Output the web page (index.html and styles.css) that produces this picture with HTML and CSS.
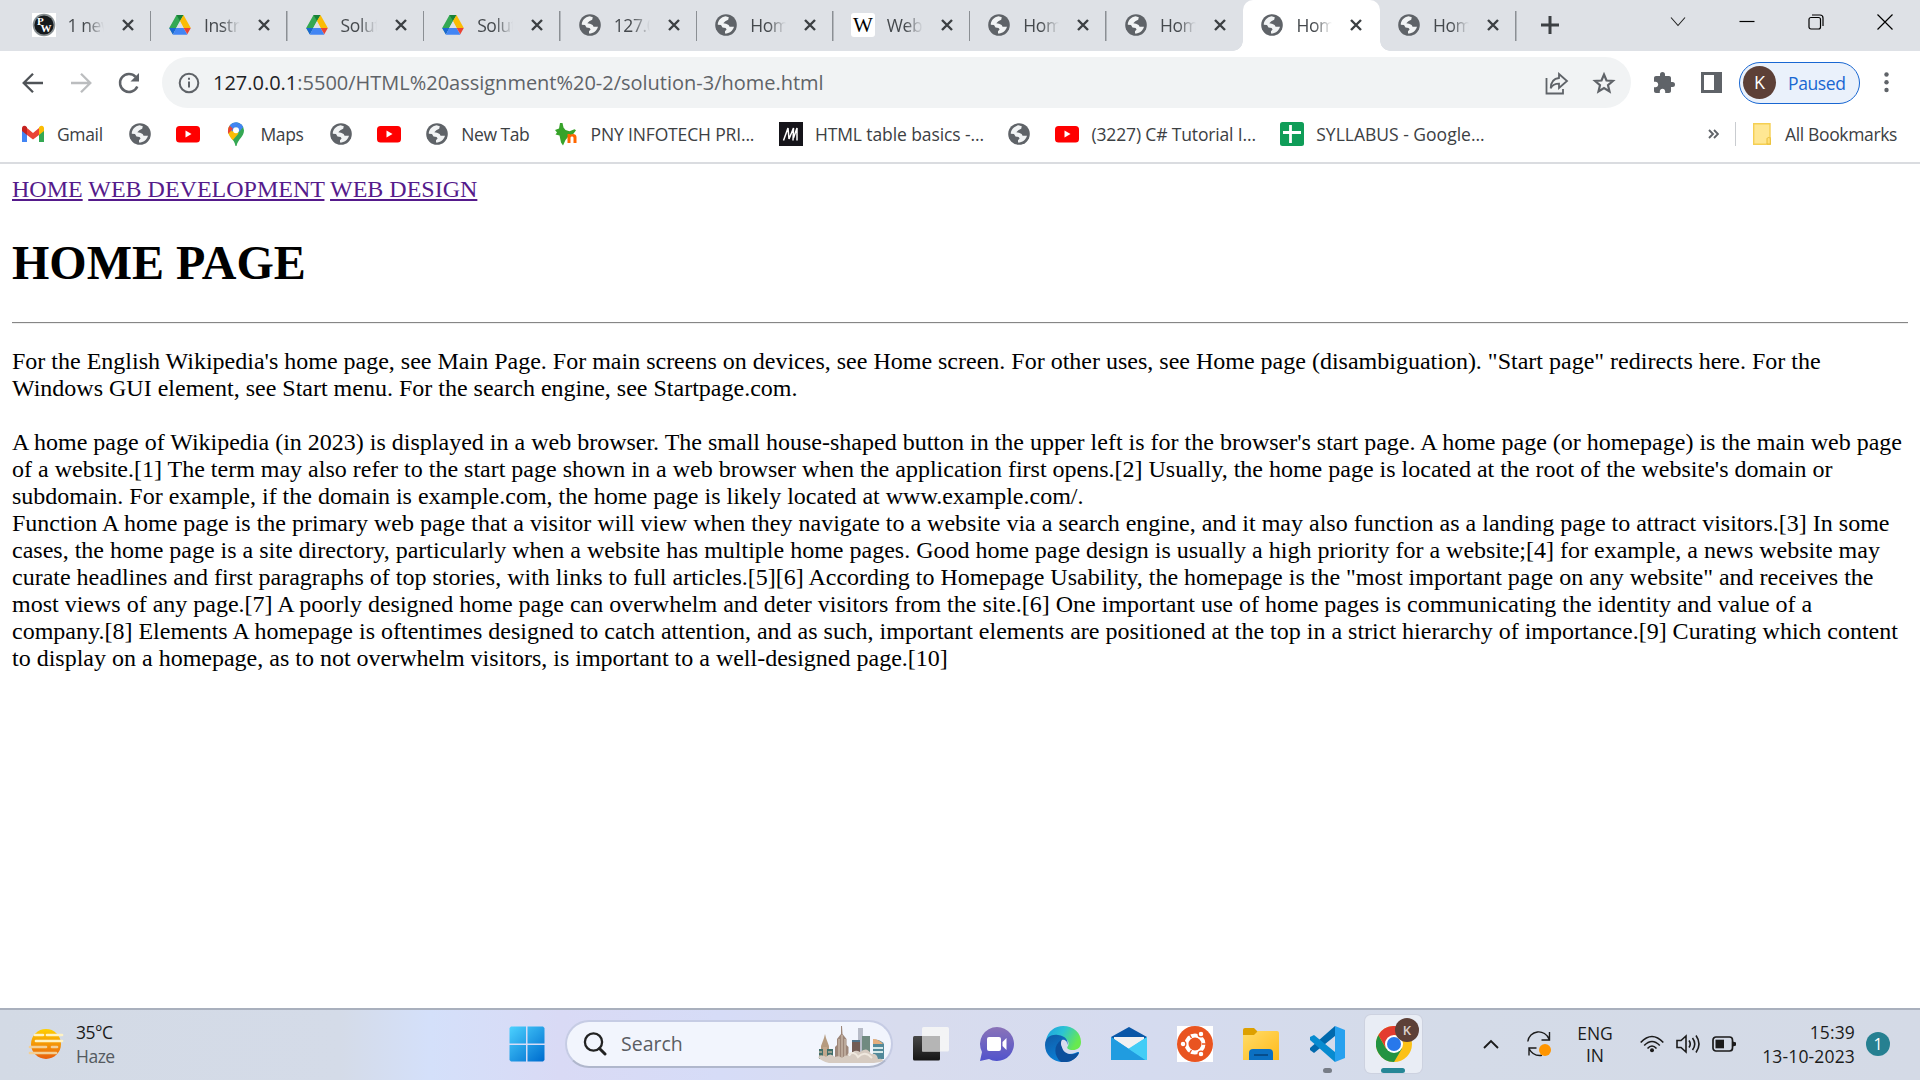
FILE: index.html
```html
<!DOCTYPE html>
<html lang="en">
<head>
<meta charset="utf-8">
<title>Home</title>
<link rel="stylesheet" href="styles.css">
</head>
<body>
<svg class="sprite" aria-hidden="true">
  <defs>
    <symbol id="globe" viewBox="0 0 24 24"><circle cx="12" cy="12" r="10.800" fill="#5f6368"/><path d="M3.800 11.800C3.600 8 7 4 11.500 3.300L14.800 4.200 14.200 6.800 11.300 8.200 9.300 10.300 12 10.800 14.600 12 15.600 13.800 20 13.800C18.800 18 15.500 20.600 11 20.600L11 18.200 12.600 16.600 11.600 15 8.500 14.400 7 12Z" fill="#f1f3f4"/></symbol>
    <symbol id="drive" viewBox="0 0 24 24"><path d="M8.500 2h7L12 8 4.800 21 1.200 15z" fill="#34a853"/><path d="M8.500 2h7L12 8z" fill="#188038"/><path d="M15.500 2l7.300 13h-7.200L12 8z" fill="#fbbc04"/><path d="M8.300 15h7.300l3.800 6.700H4.800z" fill="#4285f4"/><path d="M15.600 15h7.200l-3.500 6.300z" fill="#ea4335"/><path d="M8.300 15H1.200l3.600 6.400z" fill="#1967d2"/><path d="M12 8.600L15.600 15H8.400z" fill="#dee1e6"/></symbol>
    <symbol id="close" viewBox="0 0 14 14"><path d="M2 2l10 10M12 2L2 12" stroke="#3c4043" stroke-width="2.400" fill="none"/></symbol>
    <symbol id="youtube" viewBox="0 0 24 24"><rect y="4" width="24" height="16.500" rx="3.500" fill="#f00"/><path d="M9.500 8.500v7l6-3.500z" fill="#fff"/></symbol>
  </defs>
</svg>

<header class="browser">
  <div class="tabs">
    <div class="tab"><svg class="fav" viewBox="0 0 24 24"><path d="M0 0h24v24H0z" fill="#fff"/><circle cx="12" cy="12" r="11.300" fill="#878e91"/><circle cx="12" cy="12" r="9.600" fill="#15191c"/><text class="pw" x="5" y="12">P</text><text class="pw" x="8.500" y="19">W</text></svg><span class="tab-title">1 new</span><svg class="close"><use href="#close"/></svg></div>
    <div class="tab"><svg class="fav"><use href="#drive"/></svg><span class="tab-title">Instru</span><svg class="close"><use href="#close"/></svg></div>
    <div class="tab"><svg class="fav"><use href="#drive"/></svg><span class="tab-title">Soluti</span><svg class="close"><use href="#close"/></svg></div>
    <div class="tab"><svg class="fav"><use href="#drive"/></svg><span class="tab-title">Soluti</span><svg class="close"><use href="#close"/></svg></div>
    <div class="tab"><svg class="fav"><use href="#globe"/></svg><span class="tab-title">127.0</span><svg class="close"><use href="#close"/></svg></div>
    <div class="tab"><svg class="fav"><use href="#globe"/></svg><span class="tab-title">Home</span><svg class="close"><use href="#close"/></svg></div>
    <div class="tab"><svg class="fav" viewBox="0 0 24 24"><rect width="24" height="24" rx="3" fill="#fff"/><text class="wiki" x="12" y="19">W</text></svg><span class="tab-title">Web</span><svg class="close"><use href="#close"/></svg></div>
    <div class="tab"><svg class="fav"><use href="#globe"/></svg><span class="tab-title">Home</span><svg class="close"><use href="#close"/></svg></div>
    <div class="tab before-active"><svg class="fav"><use href="#globe"/></svg><span class="tab-title">Home</span><svg class="close"><use href="#close"/></svg></div>
    <div class="tab active"><svg class="fav"><use href="#globe"/></svg><span class="tab-title">Home</span><svg class="close"><use href="#close"/></svg></div>
    <div class="tab"><svg class="fav"><use href="#globe"/></svg><span class="tab-title">Home</span><svg class="close"><use href="#close"/></svg></div>
    <svg class="new-tab" viewBox="0 0 18 18"><path d="M9 0v18M0 9h18" stroke="#3c4043" stroke-width="3"/></svg>
    <div class="window-buttons">
      <svg viewBox="0 0 16 16"><path d="M1 3.500l7 8 7-8" fill="none" stroke="#222" stroke-width="1.100"/></svg>
      <svg viewBox="0 0 16 16"><path d="M.5 7.500h15" stroke="#000" stroke-width="1.200"/></svg>
      <svg viewBox="0 0 16 16"><rect x="1" y="3.500" width="11.500" height="11.500" rx="2" fill="none" stroke="#000" stroke-width="1.200"/><path d="M4 1h8a3 3 0 0 1 3 3v8" fill="none" stroke="#000" stroke-width="1.200"/></svg>
      <svg viewBox="0 0 16 16"><path d="M.5.500l15 15M15.500.500l-15 15" stroke="#000" stroke-width="1.200"/></svg>
    </div>
  </div>

  <div class="toolbar">
    <nav class="nav-buttons">
      <svg viewBox="0 0 24 24"><path d="M22 12H3M12 2.700L2.700 12l9.300 9.300" fill="none" stroke="#4f5357" stroke-width="2.300"/></svg>
      <svg viewBox="0 0 24 24"><path d="M2 12h19M12 2.700l9.300 9.300-9.300 9.300" fill="none" stroke="#bbbdbf" stroke-width="2.300"/></svg>
      <svg viewBox="0 0 24 24"><path d="M20.300 15.500A9 9 0 1 1 18.600 5.800" fill="none" stroke="#5f6368" stroke-width="2.500"/><path d="M22 2v8.500h-8.500z" fill="#5f6368"/></svg>
    </nav>
    <div class="omnibox">
      <svg class="info" viewBox="0 0 22 22"><circle cx="11" cy="11" r="9.300" fill="none" stroke="#5f6368" stroke-width="2"/><path d="M11 9.500v6M11 5.800v2" stroke="#5f6368" stroke-width="2"/></svg>
      <span class="url"><b>127.0.0.1</b>:5500/HTML%20assignment%20-2/solution-3/home.html</span>
      <svg class="share" viewBox="0 0 24 24"><path d="M1.500 7v15.500H18V18" fill="none" stroke="#5f6368" stroke-width="1.800"/><path d="M14 3l8 7-8 7v-4.300c-4 0-6.500 1.200-8.300 4.600C5.900 11 8.500 7.500 14 7z" fill="none" stroke="#5f6368" stroke-width="1.800"/></svg>
      <svg class="star" viewBox="0 0 24 24"><path d="M12 3.500l2.500 6 6.400.5-4.900 4.200 1.500 6.300L12 17.100l-5.500 3.400L8 14.200 3.100 10l6.400-.5z" fill="none" stroke="#5f6368" stroke-width="2.200"/></svg>
    </div>
    <svg class="puzzle" viewBox="0 0 24 24"><path d="M20.500 11H19V7c0-1.100-.9-2-2-2h-4V3.500a2.500 2.500 0 0 0-5 0V5H4c-1.100 0-1.990.9-1.990 2v3.800H3.500c1.490 0 2.700 1.210 2.700 2.700s-1.210 2.700-2.700 2.700H2V20c0 1.100.9 2 2 2h3.800v-1.500c0-1.490 1.210-2.700 2.700-2.700s2.700 1.210 2.700 2.700V22H17c1.100 0 2-.9 2-2v-4h1.500a2.500 2.500 0 0 0 0-5z" fill="#5f6368"/></svg>
    <svg class="panel" viewBox="0 0 21 21"><path d="M0 0h21v21H0z" fill="#5f6368"/><path d="M3 3h10v15H3z" fill="#fff"/></svg>
    <div class="profile"><span class="avatar">K</span><span class="paused">Paused</span></div>
    <svg class="menu" viewBox="0 0 5 21"><circle cx="2.500" cy="2.500" r="2.200"/><circle cx="2.500" cy="10.200" r="2.200"/><circle cx="2.500" cy="18" r="2.200"/></svg>
  </div>

  <div class="bookmarks">
    <div class="bm"><svg viewBox="0 0 24 24"><path d="M1 6v14h5V10z" fill="#4285f4"/><path d="M23 6v14h-5V10z" fill="#34a853"/><path d="M6 6l6 5 6-5v7l-6 4.500L6 13z" fill="#ea4335"/><path d="M1 6.500c0-3 3-3.500 5-1.200V13l-5-4z" fill="#c5221f"/><path d="M23 6.500c0-3-3-3.500-5-1.200V13l5-4z" fill="#fbbc04"/></svg><span class="w-gmail">Gmail</span></div>
    <div class="bm"><svg><use href="#globe"/></svg></div>
    <div class="bm"><svg><use href="#youtube"/></svg></div>
    <div class="bm"><svg viewBox="0 0 24 24"><path d="M4 8.500a8 8 0 0 1 16 0c0 6-6 8.500-7.500 15.500h-1C10.500 17.500 4 14 4 8.500z" fill="#34a853"/><path d="M4.200 10A8 8 0 0 1 6 3.500l8.500 8-5.800 6.800C6.500 15.500 4.500 13 4.200 10z" fill="#fbbc04"/><path d="M5.700 3.700C8 .5 12.500-.3 15 .9l-7 8.800z" fill="#4285f4"/><path d="M5.700 3.700L9 6.800l-4.800 5C3.600 8.500 4 6 5.700 3.700z" fill="#ea4335"/><path d="M15 .9a8 8 0 0 1 4.200 4L15 10l-3-5.500z" fill="#4285f4"/><circle cx="12" cy="8.300" r="3" fill="#fff"/></svg><span class="w-maps">Maps</span></div>
    <div class="bm"><svg><use href="#globe"/></svg></div>
    <div class="bm"><svg><use href="#youtube"/></svg></div>
    <div class="bm"><svg><use href="#globe"/></svg><span class="w-newtab">New Tab</span></div>
    <div class="bm"><svg viewBox="0 0 24 24"><path d="M5 1h2.500l1 4.500 2 2.500 4 1.200 5-2 1.500 1-3 4-4 1.500-3.500 4.300-2.500 5.500-2-3-1.500-7-4-1 1.500-2-2-2.500 4-1.500z" fill="#37a32a"/><path d="M12.500 21v-9h3v1c2-2 6-1 6 2v6h-3v-5c0-2-3-2-3 0v5z" fill="#f60"/></svg><span class="w-pny">PNY INFOTECH PRI...</span></div>
    <div class="bm"><svg viewBox="0 0 24 24"><path d="M0 0h24v24H0z" fill="#15141a"/><path d="M4.500 18.500L9 6l1 11L14.500 6l-.5 12.500M14.500 16L18 6v12.500" fill="none" stroke="#fff" stroke-width="1.500"/></svg><span class="w-html">HTML table basics -...</span></div>
    <div class="bm"><svg><use href="#globe"/></svg></div>
    <div class="bm"><svg><use href="#youtube"/></svg><span class="w-cs">(3227) C# Tutorial I...</span></div>
    <div class="bm"><svg viewBox="0 0 24 24"><rect width="24" height="24" rx="2.500" fill="#0f9d58"/><path d="M10.500 3v18M3 10.500h18" stroke="#fff" stroke-width="2.800"/></svg><span class="w-syl">SYLLABUS - Google...</span></div>
    <svg class="more" viewBox="0 0 11 10"><path d="M1 1l4 4-4 4M6 1l4 4-4 4" fill="none" stroke="#5f6368" stroke-width="1.900"/></svg>
    <i class="divider"></i>
    <div class="bm all"><svg viewBox="0 0 18 22"><path d="M.7.700h16.300v14h1v6.500H.700z" fill="#ffe793" stroke="#f5cf53" stroke-width="1.400"/><path d="M14 21v-5c0-2 3.300-2 3.300 0v5z" fill="#ffe07a" stroke="#e8bd38"/></svg><span class="w-all">All Bookmarks</span></div>
  </div>
</header>

<main class="page">
  <nav><a href="#">HOME</a> <a href="#">WEB DEVELOPMENT</a> <a href="#">WEB DESIGN</a></nav>
  <h1>HOME PAGE</h1>
  <hr>
  <p>For the English Wikipedia's home page, see Main Page. For main screens on devices, see Home screen. For other uses, see Home page (disambiguation). "Start page" redirects here. For the Windows GUI element, see Start menu. For the search engine, see Startpage.com.<br><br>
  A home page of Wikipedia (in 2023) is displayed in a web browser. The small house-shaped button in the upper left is for the browser's start page. A home page (or homepage) is the main web page of a website.[1] The term may also refer to the start page shown in a web browser when the application first opens.[2] Usually, the home page is located at the root of the website's domain or subdomain. For example, if the domain is example.com, the home page is likely located at www.example.com/.<br>
  Function A home page is the primary web page that a visitor will view when they navigate to a website via a search engine, and it may also function as a landing page to attract visitors.[3] In some cases, the home page is a site directory, particularly when a website has multiple home pages. Good home page design is usually a high priority for a website;[4] for example, a news website may curate headlines and first paragraphs of top stories, with links to full articles.[5][6] According to Homepage Usability, the homepage is the "most important page on any website" and receives the most views of any page.[7] A poorly designed home page can overwhelm and deter visitors from the site.[6] One important use of home pages is communicating the identity and value of a company.[8] Elements A homepage is oftentimes designed to catch attention, and as such, important elements are positioned at the top in a strict hierarchy of importance.[9] Curating which content to display on a homepage, as to not overwhelm visitors, is important to a well-designed page.[10]</p>
</main>

<footer class="taskbar">
  <div class="weather">
    <svg viewBox="0 0 36 32"><defs><linearGradient id="sun" x2="0" y2="1"><stop stop-color="#ffd000"/><stop offset="1" stop-color="#e85d0c"/></linearGradient></defs><circle cx="18" cy="16" r="15" fill="url(#sun)"/><g stroke-width="2.700" stroke-linecap="round"><path d="M7 7h8M19 7h15M8 13h26" stroke="#fff3c4"/><path d="M2 19h16M24 19h5M2 25h26" stroke="#f3cf95"/></g></svg>
    <div><div class="temp">35°C</div><div class="haze">Haze</div></div>
  </div>
  <div class="apps">
    <svg class="app" viewBox="0 0 36 36"><defs><linearGradient id="win" gradientUnits="userSpaceOnUse" x1="0" y1="0" x2="32" y2="36"><stop stop-color="#4dd3ff"/><stop offset="1" stop-color="#006fd0"/></linearGradient></defs><path d="M2 .5h15v17H.5V2zM18.500.500H34l1.500 1.500v15.500h-17zM.5 19H17v16.500H2L.5 34zM18.500 19h17v15L34 35.500H18.500z" fill="url(#win)"/></svg>
    <div class="search">
      <svg class="mag" viewBox="0 0 24 24"><circle cx="10.500" cy="10" r="8.600" fill="none" stroke="#222" stroke-width="2.300"/><path d="M16.500 16.500L22 22" stroke="#222" stroke-width="3" stroke-linecap="round"/></svg>
      <span>Search</span>
      <svg class="city" viewBox="0 0 70 38"><path d="M7 13l1-4 1 4 3 8v13H4V21z" fill="#b69b80"/><path d="M2 24h14v10H2z" fill="#426f6b"/><path d="M6 22h4v12H6z" fill="#c3a88d"/><path d="M2 27h3M11 27h4M2 31h3M11 31h4" stroke="#b9b19b" stroke-width="1.500"/><path d="M24 1l1 0 .5 8 4 5v6l2 2v14H18V22l2-2v-6l4-5z" fill="#9d8679"/><path d="M22 14v22M25 10v26M28 14v22" stroke="#d9cabb"/><path d="M41 3h5v25h-5z" fill="#b8bcc8"/><path d="M45 11h8v18h-8z" fill="#708a80"/><path d="M35 16h8v13h-8z" fill="#725c55"/><path d="M35 16h8" stroke="#517288" stroke-width="2"/><path d="M56 15c5-1 9 1 11 4v15H56z" fill="#52899a"/><path d="M56 14c4 0 8 2 10 5H56z" fill="#e3ad7c"/><path d="M56 23h10M56 27h10" stroke="#d7e9e9" stroke-width="2"/><path d="M1 32q5-3 8 0q4-5 9 0q4-2 7 1q4-4 8-2q4-8 10-4q7-6 11 2q6-1 7 5q5-1 5 2-5 2-13 2H12Q4 36 1 32z" fill="#d6cbc1"/><path d="M31 30q6-5 10 2q7-7 14 1" fill="none" stroke="#efe8de" stroke-width="2"/></svg>
    </div>
    <svg class="app" viewBox="0 0 36 36"><defs><linearGradient id="dk" x2="0" y2="1"><stop stop-color="#484848"/><stop offset="1" stop-color="#151515"/></linearGradient></defs><rect y="10" width="27" height="24.500" rx="1.500" fill="url(#dk)"/><rect x="9" y="1" width="27" height="24.500" rx="1.500" fill="#f5f5f5" opacity=".92"/><path d="M9 10h18v15.500H9z" fill="#b5b5b5"/></svg>
    <svg class="app" viewBox="0 0 36 36"><defs><linearGradient id="chat" x2="0" y2="1"><stop stop-color="#8a73b8"/><stop offset="1" stop-color="#5153cc"/></linearGradient></defs><path d="M18 1a17 17 0 1 1-8 32L1 35l2-9A17 17 0 0 1 18 1z" fill="url(#chat)"/><rect x="8" y="11" width="14" height="14" rx="2" fill="#fff"/><path d="M23.500 16l4-4v12l-4-4z" fill="#fff"/></svg>
    <svg class="app" viewBox="0 0 36 36"><defs><linearGradient id="e1" x2="1" y2=".4"><stop stop-color="#1b9de2"/><stop offset=".5" stop-color="#2cc3d4"/><stop offset="1" stop-color="#68e94f"/></linearGradient><linearGradient id="e2" x2=".6" y2="1"><stop stop-color="#105aa5"/><stop offset="1" stop-color="#0a85dc"/></linearGradient></defs><path d="M1 14C3 5 10 0 18 0c11 0 18 7 18 16 0 6-4 8-8 8-5 0-7-2-5-4 2-4-1-8-7-8z" fill="url(#e1)"/><path d="M0 19C0 10 8 8 13 9c8 1 11 6 9 10l-3-2c-4 2-4 11 5 11 5 0 8-2 9-2 2 0 1 2-1 4-4 5-9 6-14 6C8 36 0 29 0 19z" fill="url(#e2)"/><path d="M16 14c-7 5-8 15 0 22 8 1 14-2 17-7 1-2 1-3-1-2-7 3-14 0-15-6-.5-3 1-5 3-6z" fill="#0c4f9c"/><path d="M17 14c3-1 6 2 5 5-2 2-1 4 1 5-4 0-7-3-7-6 0-2 0-3 1-4z" fill="#d8dcee"/></svg>
    <svg class="app" viewBox="0 0 36 36"><path d="M0 11L18 1l18 10v7H0z" fill="#0a57a7"/><path d="M3 11h30v12H3z" fill="#f1f1f2"/><path d="M0 11l18 12L36 11v23H0z" fill="#2aabe8"/><path d="M36 11L17 23l17 11h2z" fill="#42cdf6"/><path d="M0 11v23h34z" fill="#209ce0"/></svg>
    <svg class="app" viewBox="0 0 36 36"><path d="M0 0h36v36H0z" fill="#fff"/><circle cx="18" cy="18" r="18" fill="#e95420"/><circle cx="18" cy="18" r="8.500" fill="none" stroke="#fff" stroke-width="4"/><g fill="#fff" stroke="#e95420" stroke-width="1.300"><circle cx="6" cy="18" r="2.900"/><circle cx="24" cy="8" r="2.900"/><circle cx="24" cy="28" r="2.900"/></g><path d="M25 18h5M14.500 12l-3-5M14.500 24l-3 5" stroke="#e95420" stroke-width="1.400"/></svg>
    <svg class="app" viewBox="0 0 36 36"><defs><linearGradient id="fold" x2="1" y2="1"><stop stop-color="#ffdc69"/><stop offset="1" stop-color="#ffba1a"/></linearGradient></defs><path d="M0 4q0-2 2-2h9l4 4v4H0z" fill="#dda000"/><path d="M0 9h11l4-4h19q2 0 2 2v27H0z" fill="url(#fold)"/><path d="M6 34v-7q0-4 4-4h16q4 0 4 4v7z" fill="#0b70c2"/><path d="M11 29h14" stroke="#064a86" stroke-width="1.800"/></svg>
    <div class="app-slot vs"><svg class="app" viewBox="0 0 36 36"><path d="M26 0v10L5 27l-4-3v-2z" fill="#0069ad"/><path d="M26 36V26L5 9l-4 2v3z" fill="#078bd0"/><path d="M26 0l10 4v28l-10 4z" fill="#27a1ef"/></svg></div>
    <div class="app-slot chrome"><svg class="app" viewBox="0 0 36 36"><circle cx="18" cy="18" r="18" fill="#fbc116"/><path d="M2.400 9A18 18 0 0 0 18 36l8-13.500-16 0z" fill="#229342"/><path d="M2.400 9A18 18 0 0 1 33.600 9H18L10.200 22.500z" fill="#e33b2e"/><circle cx="18" cy="18" r="9" fill="#fff"/><circle cx="18" cy="18" r="7" fill="#2878eb"/></svg><span class="mini">K</span></div>
  </div>
  <div class="tray">
    <svg class="chev" viewBox="0 0 16 10"><path d="M1 9l7-7 7 7" fill="none" stroke="#1b1b1b" stroke-width="1.900"/></svg>
    <svg class="sync" viewBox="0 0 24 26"><path d="M.8 10.500A11 11 0 0 1 22 8M22.500 1v8h-8M2 24.500v-7.500h7.500M2 17.500c3 6 8 7.500 13 6.800" fill="none" stroke="#1b1b1b" stroke-width="1.400"/><circle cx="18" cy="19" r="6" fill="#ff9500"/></svg>
    <div class="lang">ENG<br>IN</div>
    <svg class="wifi" viewBox="0 0 24 18"><g fill="none" stroke="#1b1b1b" stroke-width="1.600"><path d="M.7 7.500q11.300-12 22.600 0M4.200 10.500q7.800-8 15.600 0M7.500 13.500q4.500-5 9 0"/></g><circle cx="12" cy="15.300" r="2" fill="#1b1b1b"/></svg>
    <svg class="vol" viewBox="0 0 24 20"><g fill="none" stroke="#1b1b1b" stroke-width="1.600"><path d="M1 6.500h4l5-4.500v16l-5-4.500H1zM13 6.500q2.500 3.500 0 7M16.500 4q4.500 6 0 12M20 1.500q6 8.500 0 17"/></g></svg>
    <svg class="bat" viewBox="0 0 24 16"><rect x="1" y="1" width="19.500" height="14" rx="3" fill="none" stroke="#1b1b1b" stroke-width="1.700"/><rect x="3.500" y="3.700" width="8.500" height="8.600" fill="#1b1b1b"/><path d="M21 5.500l3 1v3l-3 1z" fill="#1b1b1b"/></svg>
    <div class="clock">15:39<br>13-10-2023</div>
    <span class="badge">1</span>
  </div>
</footer>
</body>
</html>
```
FILE: styles.css
```css
* { box-sizing: border-box; }
body {
  margin: 0;
  width: 1920px;
  height: 1080px;
  overflow: hidden;
  display: flex;
  flex-direction: column;
  background: #fff;
  font-family: "Open Sans", "Noto Sans", sans-serif;
}
svg { display: block; flex: none; }
.sprite { position: absolute; width: 0; height: 0; }

.browser { height: 164px; flex: none; border-bottom: 2px solid #dadce0; }

/* Tab strip */
.tabs { display: flex; height: 51px; padding-left: 14.500px; background: #dee1e6; }
.tab {
  width: 136.550px;
  height: 51px;
  flex: none;
  display: flex;
  align-items: center;
  padding: 0 0 1px 17px;
  background: linear-gradient(#8b8f94, #8b8f94) right 11px / 1.500px 30px no-repeat;
}
.tab.before-active { background: none; }
.tab.active { position: relative; background: #fff; border-radius: 10px 10px 0 0; }
.tab.active::before, .tab.active::after {
  content: "";
  position: absolute;
  bottom: 0;
  width: 10px;
  height: 10px;
}
.tab.active::before { left: -10px; background: radial-gradient(circle at 0 0, transparent 9.500px, #fff 10px); }
.tab.active::after { right: -10px; background: radial-gradient(circle at 100% 0, transparent 9.500px, #fff 10px); }
.fav { width: 24px; height: 24px; }
.tab-title {
  width: 36px;
  margin-left: 12px;
  overflow: hidden;
  white-space: nowrap;
  font-size: 17.500px;
  line-height: 24px;
  letter-spacing: -0.400px;
  color: #45494d;
  -webkit-mask-image: linear-gradient(90deg, #000 50%, transparent 100%);
  mask-image: linear-gradient(90deg, #000 50%, transparent 100%);
}
.close { width: 14px; height: 14px; margin-left: 17px; }
.pw { font: bold 11px "Liberation Serif", serif; fill: #fff; }
.wiki { font: 21px "Liberation Serif", serif; text-anchor: middle; fill: #000; }
.new-tab { width: 18px; height: 18px; margin: 16px 0 0 24px; }
.window-buttons { display: flex; gap: 53px; margin: 14px 27px 0 auto; }
.window-buttons svg { width: 16px; height: 16px; }

/* Toolbar */
.toolbar { display: flex; align-items: center; height: 63px; padding: 0 31px 0 21px; }
.nav-buttons { display: flex; gap: 24px; width: 141px; flex: none; }
.nav-buttons svg { width: 24px; height: 24px; }
.omnibox {
  display: flex;
  align-items: center;
  width: 1469px;
  height: 51px;
  flex: none;
  padding: 0 15px 0 16px;
  border-radius: 26px;
  background: #f1f3f4;
}
.info { width: 22px; height: 22px; }
.url {
  margin-left: 13px;
  white-space: nowrap;
  font-size: 20px;
  line-height: 28px;
  letter-spacing: -0.010px;
  color: #5f6368;
}
.url b { font-weight: 400; color: #202124; }
.share { width: 24px; height: 24px; margin-left: auto; }
.star { width: 24px; height: 24px; margin-left: 23px; }
.puzzle { width: 24px; height: 24px; margin-left: 21px; }
.panel { width: 21px; height: 21px; margin-left: 25px; }
.profile {
  display: flex;
  align-items: center;
  width: 121px;
  height: 42px;
  margin-left: 17px;
  flex: none;
  border: 1.500px solid #1967d2;
  border-radius: 21px;
  background: #eaf1fb;
}
.avatar {
  width: 33px;
  height: 33px;
  margin-left: 3px;
  border-radius: 50%;
  background: #5d4037;
  color: #fff;
  text-align: center;
  font-size: 18px;
  line-height: 33px;
}
.paused { margin-left: 12px; color: #1967d2; font-size: 17.500px; letter-spacing: -0.400px; }
.menu { width: 5px; height: 21px; margin-left: auto; fill: #5f6368; }

/* Bookmarks */
.bookmarks { display: flex; align-items: center; gap: 24.300px; height: 48px; padding: 0 22px 0 21px; margin-top: -4px; }
.bm { display: flex; align-items: center; gap: 12px; flex: none; }
.bm svg { width: 24px; height: 24px; }
.bm span {
  white-space: nowrap;
  color: #3c4043;
  font-size: 17.500px;
  line-height: 24px;
  letter-spacing: -0.350px;
}
.w-gmail { width: 46.500px; }
.w-maps { width: 44px; }
.w-newtab { width: 69px; }
.bm .w-newtab { letter-spacing: -0.450px; }
.w-pny { width: 164px; }
.bm .w-pny { letter-spacing: -0.150px; }
.w-html { width: 168px; }
.bm .w-html { letter-spacing: -0.100px; }
.w-cs { width: 164.500px; }
.bm .w-cs { letter-spacing: -0.150px; }
.w-syl { width: 169px; }
.bm .w-syl { letter-spacing: 0; }
.w-all { width: 113px; }
.more { width: 11px; height: 10px; margin-left: auto; }
.divider { width: 1px; height: 24px; margin-left: -9px; background: #c9ccd0; }
.all { gap: 14px; margin-left: -7px; }
.all svg { width: 18px; height: 22px; }

/* Document */
.page {
  flex: 1;
  padding: 12px 12px 0;
  font-family: "Liberation Serif", "Times New Roman", serif;
  font-size: 24px;
  line-height: 27px;
  color: #000;
}
.page a { color: #551a8b; text-decoration: underline; }
.page h1 { margin: 32px 0; font-size: 48px; line-height: 55px; }
.page hr { margin: 0; height: 2px; border: 0; border-top: 1px solid #868686; border-bottom: 1px solid #eee; }
.page p { margin: 24px 0 0; }

/* Taskbar */
.taskbar {
  display: flex;
  align-items: center;
  height: 72px;
  flex: none;
  padding-bottom: 2px;
  border-top: 2px solid #a9b0bd;
  background: linear-gradient(90deg, #d3dae5 0, #d4dbe8 340px, #d4e0fa 430px, #d9daf5 560px, #d6dcf7 720px, #d8dcee 900px, #d5dbef 1150px, #d4dbe8 1450px, #d4dae6 100%);
  color: #1b1b1b;
  font-size: 17.500px;
  line-height: 24px;
}
.weather { display: flex; align-items: center; gap: 12px; width: 509px; padding-left: 28px; letter-spacing: -0.500px; }
.weather svg { width: 36px; height: 32px; }
.haze { color: #555a60; }
.apps { display: flex; align-items: center; gap: 30px; }
.app { width: 36px; height: 36px; }
.search {
  display: flex;
  align-items: center;
  width: 328px;
  height: 48px;
  margin: 0 -10px;
  padding: 0 4px 0 16px;
  border: 2px solid #c6cce4;
  border-bottom-color: #b0b7cc;
  border-radius: 24px;
  background: #f2f5fd;
  color: #5a5d63;
  font-size: 19.500px;
}
.mag { width: 24px; height: 24px; margin-right: 14px; }
.city { width: 70px; height: 38px; margin-left: auto; }
.app-slot { position: relative; display: flex; align-items: center; justify-content: center; }
.vs::after, .chrome::after { content: ""; position: absolute; background: #777d87; border-radius: 3px; }
.vs::after { width: 9px; height: 5px; left: 14px; bottom: -11px; }
.chrome { width: 57px; height: 58px; margin-left: -10px; border-radius: 6px; background: #e9edf5; box-shadow: 0 0 0 1px #cdd2e0; }
.chrome::after { width: 24px; height: 5px; left: 16px; bottom: 0; background: #268796; }
.mini {
  position: absolute;
  top: 3px;
  right: 3px;
  width: 24px;
  height: 24px;
  border-radius: 50%;
  background: #5d4037;
  color: #dccfca;
  font-size: 13px;
  font-weight: 600;
  text-align: center;
}
.tray { display: flex; align-items: center; margin-left: auto; padding-right: 30px; }
.chev { width: 16px; height: 10px; }
.sync { width: 24px; height: 26px; margin-left: 28px; }
.lang { width: 42px; margin-left: 23px; text-align: center; line-height: 22.500px; letter-spacing: -0.100px; }
.wifi { width: 24px; height: 18px; margin-left: 24px; }
.vol { width: 24px; height: 20px; margin-left: 12px; }
.bat { width: 24px; height: 16px; margin-left: 12px; }
.clock { width: 119px; text-align: right; letter-spacing: 0.150px; }
.badge {
  width: 24px;
  height: 24px;
  margin-left: 11px;
  border-radius: 50%;
  background: #268091;
  color: #fff;
  text-align: center;
  font-size: 16px;
}
```
